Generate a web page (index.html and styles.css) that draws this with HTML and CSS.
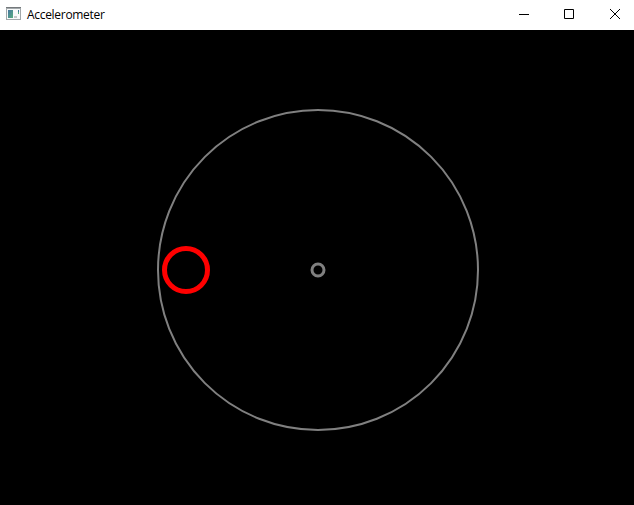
FILE: index.html
```html
<!DOCTYPE html>
<html lang="en">
<head>
<meta charset="utf-8">
<title>Accelerometer</title>
<link rel="stylesheet" href="styles.css">
</head>
<body>
<div class="window">
  <header class="titlebar">
    <svg class="app-icon" width="16" height="16" viewBox="0 0 16 16">
      <defs>
        <linearGradient id="pane" x1="0" y1="0" x2="1" y2="1">
          <stop offset="0" stop-color="#4676a0"/>
          <stop offset="1" stop-color="#58ae80"/>
        </linearGradient>
      </defs>
      <g shape-rendering="crispEdges">
        <rect x="0" y="0" width="15" height="13" fill="#a2a8ab"/>
        <rect x="0" y="0" width="15" height="1" fill="#74797c"/>
        <rect x="1" y="2" width="13" height="10" fill="#f8fafa"/>
        <rect x="2" y="3" width="5" height="8" fill="url(#pane)"/>
        <rect x="8" y="9" width="3" height="2" fill="#c5c9cb"/>
        <rect x="12" y="3" width="1" height="2" fill="#4676a0"/>
        <rect x="12" y="5" width="1" height="2" fill="#58ae80"/>
      </g>
    </svg>
    <h1 class="title">Accelerometer</h1>
    <div class="controls">
      <svg class="control" viewBox="0 0 46 30"><path d="M23 14.500h10"/></svg>
      <svg class="control" viewBox="0 0 46 30"><path d="M22.500 9.500h9v9h-9z"/></svg>
      <svg class="control" viewBox="0 0 46 30"><path d="M22 9l10 10m0-10l-10 10"/></svg>
    </div>
  </header>
  <main class="canvas">
    <svg width="634" height="475" viewBox="0 30 634 475">
      <circle cx="318" cy="270" r="160" class="range"/>
      <circle cx="318" cy="270" r="6" class="center"/>
      <circle cx="186" cy="270" r="21.500" class="ball"/>
    </svg>
  </main>
</div>
</body>
</html>
```
FILE: styles.css
```css
body { margin: 0; }
.window { width: 634px; height: 505px; display: flex; flex-direction: column; background: #000; overflow: hidden; }
.titlebar { height: 30px; display: flex; align-items: center; background: #fff; padding-left: 6px; }
.app-icon { flex: none; }
.title { margin: 0 0 0 5px; font: 12px/30px "Open Sans", "Noto Sans", sans-serif; letter-spacing: -0.3px; color: #000; }
.controls { display: flex; margin-left: auto; }
.control { width: 46px; height: 30px; fill: none; stroke: #000; stroke-width: 1; }
.canvas { flex: 1; }
.canvas svg { display: block; }
.range, .center, .ball { fill: none; }
.range { stroke: #808080; stroke-width: 2; }
.center { stroke: #808080; stroke-width: 3; }
.ball { stroke: #f00; stroke-width: 5; }
```
